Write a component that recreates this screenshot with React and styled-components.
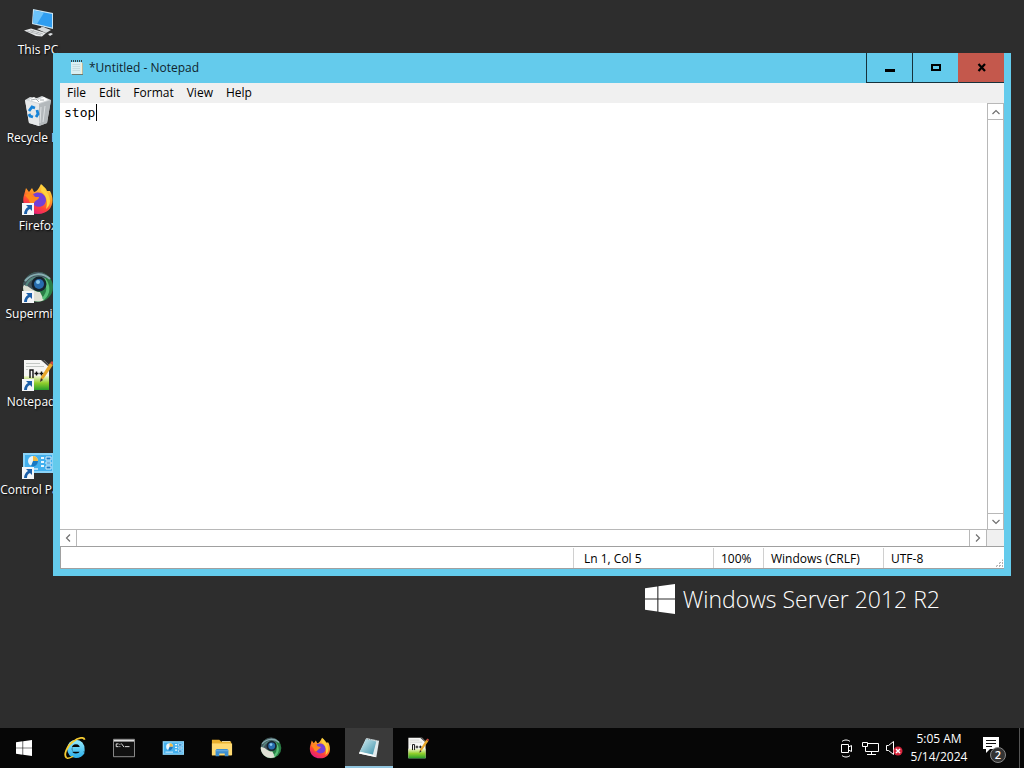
import React, { useState } from 'react';
import styled, { createGlobalStyle } from 'styled-components';

const statusItems = [
    { text: "Ln 1, Col 5", width: 140, pad: 10 },
    { text: "100%", width: 50, pad: 7 },
    { text: "Windows (CRLF)", width: 120, pad: 7 },
    { text: "UTF-8", width: 120, pad: 7 },
]

const desktopItems = [
    { name: "This PC", Icon: ComputerIcon },
    { name: "Recycle Bin", Icon: RecycleIcon },
    { name: "Firefox", Icon: FirefoxIcon, shortcut: true },
    { name: "Supermicro", Icon: SupermicroIcon, shortcut: true },
    { name: "Notepad++", Icon: NotepadPlusIcon, shortcut: true },
    { name: "Control Panel", Icon: ControlPanelIcon, shortcut: true },
]

const taskItems = [
    { name: "Internet Explorer", Icon: ExplorerIcon },
    { name: "Command Prompt", Icon: TerminalIcon },
    { name: "Control Panel", Icon: ControlPanelIcon },
    { name: "File Explorer", Icon: FolderIcon },
    { name: "Supermicro", Icon: SupermicroIcon },
    { name: "Firefox", Icon: FirefoxIcon },
    { name: "Notepad", Icon: NotepadTaskIcon, active: true },
    { name: "Notepad++", Icon: NotepadPlusIcon },
]

export default function App(){

    const [text, setText] = useState("stop")

    return(
        <>
        <GlobalStyle/>
        <Screen>
            <Desktop>
                <IconList>
                    {desktopItems.map(({ name, Icon, shortcut }) => (
                        <DesktopIcon key={name}>
                            <IconBox>
                                <Icon size={32}/>
                                {shortcut ? <ShortcutArrow/> : ""}
                            </IconBox>
                            <IconLabel>{name}</IconLabel>
                        </DesktopIcon>
                    ))}
                </IconList>

                <Brand>
                    <WindowsLogo size={30}/>
                    <BrandName>Windows Server 2012 R2</BrandName>
                </Brand>

                <NotepadWindow>
                    <TitleBar>
                        <NotepadSmallIcon/>
                        <Title>*Untitled - Notepad</Title>
                        <TitleButton aria-label="Minimize">
                            <svg width="12" height="12"><path d="M1 7h10v3H1z" fill="#000"/></svg>
                        </TitleButton>
                        <TitleButton aria-label="Maximize">
                            <svg width="12" height="12"><path d="M2 3h8v5H2z" fill="none" stroke="#000" strokeWidth="2"/></svg>
                        </TitleButton>
                        <TitleButton aria-label="Close" $close>
                            <svg width="12" height="12"><path d="M2.500 2L9 9M9 2L2.500 9" stroke="#000" strokeWidth="2.200"/></svg>
                        </TitleButton>
                    </TitleBar>

                    <MenuBar>
                        {["File","Edit","Format","View","Help"].map((m) => <MenuButton key={m}>{m}</MenuButton>)}
                    </MenuBar>

                    <Editor>
                        <PageArea>
                            <TextArea aria-label="Text editor" spellCheck={false} value={text} onChange={(e) => setText(e.target.value)}/>
                            <Caret/>
                        </PageArea>
                        <VerticalScroll>
                            <ScrollButton aria-label="Scroll up"><Chevron d="M1.500 7L5 3.500L8.500 7"/></ScrollButton>
                            <ScrollButton aria-label="Scroll down"><Chevron d="M1.500 3L5 6.500L8.500 3"/></ScrollButton>
                        </VerticalScroll>
                        <HorizontalScroll>
                            <ScrollButton $side aria-label="Scroll left"><Chevron d="M7 1.500L3.500 5L7 8.500"/></ScrollButton>
                            <ScrollButton $side aria-label="Scroll right"><Chevron d="M3 1.500L6.500 5L3 8.500"/></ScrollButton>
                        </HorizontalScroll>
                        <ScrollCorner/>
                    </Editor>

                    <StatusBar>
                        {statusItems.map((s) => <StatusCell key={s.text} $width={s.width} $pad={s.pad}>{s.text}</StatusCell>)}
                        <Grip/>
                    </StatusBar>
                </NotepadWindow>
            </Desktop>

            <Taskbar>
                <StartButton aria-label="Start"><WindowsLogo size={16}/></StartButton>
                <TaskList>
                    {taskItems.map(({ name, Icon, active }) => (
                        <TaskButton key={name} aria-label={name} $active={active}><Icon size={22}/></TaskButton>
                    ))}
                </TaskList>
                <Tray>
                    <TrayIcons/>
                    <Clock>
                        <span>5:05 AM</span>
                        <span>5/14/2024</span>
                    </Clock>
                    <NoticeButton aria-label="Notifications">
                        <svg width="24" height="24">
                            <path d="M1 1h16v12H8l-4 4v-4H1z" fill="#fff"/>
                            <path d="M4 4.500h10M4 7.500h10M4 10.500h6" stroke="#111"/>
                        </svg>
                        <Badge>2</Badge>
                    </NoticeButton>
                    <ShowDesktop aria-label="Show desktop"/>
                </Tray>
            </Taskbar>
        </Screen>
        </>
    )
}

// ICONS

function Chevron({ d }){
    return <svg width="10" height="10"><path d={d} fill="none" stroke="#707070" strokeWidth="1.200"/></svg>
}

function WindowsLogo({ size }){
    return(
        <svg width={size} height={size} viewBox="0 0 30 30" fill="#fff">
            <path d="M0 4.200L12.300 2.500V14.400H0zM13.400 2.300L30 0V14.400H13.400zM0 15.600H12.300V27.500L0 25.800zM13.400 15.600H30V30L13.400 27.700z"/>
        </svg>
    )
}

function ComputerIcon({ size }){
    return(
        <svg width={size} height={size} viewBox="0 0 32 32">
            <path d="M11 2L31 6V22L10 17z" fill="#c9e4f3"/>
            <path d="M12 3.500L30 7V20.500L11 16z" fill="#2f9df0"/>
            <path d="M12 3.500L22 5.400L15 17L11 16z" fill="#6cc3fa"/>
            <path d="M19 19.500l4 1v3l-4-1z" fill="#9aa3a8"/>
            <path d="M15 22l6-2 8 3-5 3z" fill="#d5d9db"/>
            <path d="M2 23.500L9 21.500L24 26L20 29.500L14 29z" fill="#e4e6e7"/>
            <path d="M5 24l14 4M8 23l13 4M9 25.500l3-2M14 27l3-2" stroke="#a4a8aa" strokeWidth=".7"/>
            <path d="M26 27l3-1 2 1-3 2z" fill="#dfe2e4"/>
        </svg>
    )
}

function RecycleIcon({ size }){
    return(
        <svg width={size} height={size} viewBox="0 0 32 32">
            <path d="M3 5L8 2L15 3L20 1L29 5L25 28L17 31L7 28z" fill="#d3d7d9"/>
            <path d="M3 5L17 9V31L7 28z" fill="#e6e8e9"/>
            <path d="M17 9L29 5L25 28L17 31z" fill="#b4b9bc"/>
            <path d="M7 5L12 2L16 5L22 2L26 5L17 8z" fill="#fff"/>
            <path d="M9 5l5-1 3 3M18 5l4 0" stroke="#a9afb2" fill="none"/>
            <path d="M7 16L10 12L13 13M15 15L16 19L14 22M11 22L8 21L7 19" fill="none" stroke="#1683d8" strokeWidth="2.800"/>
            <path d="M19 12l-1 16M23 11l-2 16" stroke="#dce0e2" strokeWidth="1"/>
        </svg>
    )
}

function FirefoxIcon({ size }){
    return(
        <svg width={size} height={size} viewBox="0 0 32 32">
            <defs>
                <linearGradient id="fox" x1=".8" y1="0" x2=".3" y2="1">
                    <stop offset="0" stopColor="#ffe54a"/>
                    <stop offset=".4" stopColor="#ff9a24"/>
                    <stop offset=".7" stopColor="#ff4339"/>
                    <stop offset="1" stopColor="#e31684"/>
                </linearGradient>
            </defs>
            <path d="M19 1C22 4 24 5 25 8L28 8C34 19 29 31 16 31C5 31 -1 22 2 12L4 5L7 9L10 5L12 9C15 9 17 5 19 1z" fill="url(#fox)"/>
            <path d="M11 11C17 7 24 11 24 17C24 23 17 26 12 22C8 19 9 17 12 17L16 15C13 14 12 13 11 11z" fill="#7440d6"/>
            <path d="M3 12L8 10L11 14L17 14C17 17 13 17 12 20C10 22 7 20 7 17z" fill="#ff8a1c"/>
            <path d="M20 2C22 7 28 10 28 18C28 22 26 24 24 26C26 19 25 13 19 8z" fill="#ffd43c"/>
        </svg>
    )
}

function SupermicroIcon({ size }){
    return(
        <svg width={size} height={size} viewBox="0 0 32 32">
            <circle cx="16" cy="16" r="15" fill="#2a7d46"/>
            <path d="M1 16A15 15 0 0 1 25 4L20 20L10 19z" fill="#43545c"/>
            <path d="M2 14C8 15 11 21 18 21L22 29C12 34 1 26 1 16z" fill="#dfe0d4"/>
            <path d="M3 10C10 2 20 1 28 8" fill="none" stroke="#87aeb1" strokeWidth="2"/>
            <path d="M4 15C7 7 15 4 23 8" fill="none" stroke="#54877f" strokeWidth="2"/>
            <path d="M22 8C28 16 26 23 21 28" fill="none" stroke="#58c078" strokeWidth="3"/>
            <circle cx="17" cy="13" r="7.500" fill="#16232e"/>
            <circle cx="17" cy="13" r="5" fill="#286cae"/>
            <circle cx="16" cy="11" r="2" fill="#8bc9ee"/>
        </svg>
    )
}

function NotepadPlusIcon({ size }){
    return(
        <svg width={size} height={size} viewBox="0 0 32 32">
            <defs>
                <linearGradient id="leaf" x1="0" y1="0" x2="0" y2="1">
                    <stop offset="0" stopColor="#f3f6d2"/>
                    <stop offset=".5" stopColor="#91cf2c"/>
                    <stop offset="1" stopColor="#269e2b"/>
                </linearGradient>
            </defs>
            <path d="M2 1H22L27 6V31H2z" fill="#f6f6f4"/>
            <path d="M19 1H22L27 6V8z" fill="#444"/>
            <path d="M4 4.500H18M4 7.500H22M4 10.500H6" stroke="#c4c8c4"/>
            <path d="M2 17H27V31H2z" fill="url(#leaf)"/>
            <path d="M8 19V11H11V19M12.500 14.500H16.500M14.500 12.500V16.500M17.500 14.500H21.500M19.500 12.500V16.500" fill="none" stroke="#111" strokeWidth="1.400"/>
            <path d="M28 4L31 6L22 19L18 23L19 18z" fill="#e8a62a"/>
            <path d="M28 4L30 2L32 4L31 6z" fill="#d1493e"/>
            <path d="M18 23L19 19L21 21z" fill="#333"/>
        </svg>
    )
}

function ControlPanelIcon({ size }){
    return(
        <svg width={size} height={size} viewBox="0 0 32 32">
            <path d="M1 6H32V26H1z" fill="#8bd3f7"/>
            <path d="M3 8H30V24H3z" fill="#43b0ee"/>
            <circle cx="11" cy="14" r="5" fill="#e9f6fd"/>
            <path d="M11 14V9A5 5 0 0 1 16 14z" fill="#f2ba43"/>
            <path d="M11 14H16A5 5 0 0 1 9 19z" fill="#1979c4"/>
            <path d="M19 11H22M19 15H22M19 19H22" stroke="#e9f6fd" strokeWidth="2"/>
            <path d="M24 10H29V13H24zM24 15H29V17H24zM24 19H29V22H24z" fill="#1979c4" stroke="#d8f0fc"/>
            <path d="M5 22H16" stroke="#d8f0fc" strokeWidth="1.500"/>
        </svg>
    )
}

function ExplorerIcon({ size }){
    return(
        <svg width={size} height={size} viewBox="0 0 24 24">
            <defs>
                <linearGradient id="ie" x1="0" y1="0" x2="0" y2="1">
                    <stop offset="0" stopColor="#8be4fb"/>
                    <stop offset="1" stopColor="#35b4ea"/>
                </linearGradient>
            </defs>
            <path d="M20.500 16C18.500 19.500 16 20.500 13 20.500C8.500 20.500 6 17 6 13C6 8.500 9 5.500 13 5.500C17.500 5.500 20 8.500 20 13.500H9" fill="none" stroke="url(#ie)" strokeWidth="5"/>
            <path d="M3 23C-1 20 3 10 10 5C16 0 22 0 22.500 3" fill="none" stroke="#f5cb32" strokeWidth="2"/>
            <path d="M3 23C5 24 8 22 10 21" fill="none" stroke="#f5cb32" strokeWidth="1.500"/>
        </svg>
    )
}

function TerminalIcon({ size }){
    return(
        <svg width={size} height={size} viewBox="0 0 24 24">
            <path d="M.5 2.500H23.500V21.500H.5z" fill="#111" stroke="#999"/>
            <path d="M1 3H23V5H1z" fill="#ddd"/>
            <path d="M6 7.500H3.500V10.500H6M7.500 7.500v1M7.500 10v1M9 7L12 11M13 10.500H18" fill="none" stroke="#eee"/>
        </svg>
    )
}

function FolderIcon({ size }){
    return(
        <svg width={size} height={size} viewBox="0 0 24 24">
            <path d="M1 3H9L11 5H22V20H1z" fill="#e9af2d"/>
            <path d="M1 7H23V20H1z" fill="#ffda72"/>
            <path d="M12 5H21" stroke="#fff1ba"/>
            <path d="M5 21V15C5 13.500 6 13 7 13H17C18.500 13 19 14 19 15V21H15V18H9V21z" fill="#3d8fd1"/>
            <path d="M5 15H19" stroke="#73b5e8"/>
        </svg>
    )
}

function NotepadTaskIcon({ size }){
    return(
        <svg width={size} height={size} viewBox="0 0 24 24">
            <defs>
                <linearGradient id="pad" x1="0" y1="0" x2="1" y2="1">
                    <stop offset="0" stopColor="#d8f1f5"/>
                    <stop offset="1" stopColor="#3a8fa8"/>
                </linearGradient>
            </defs>
            <path d="M9 1L23 4L20 22L1 18z" fill="#e1eaec"/>
            <path d="M9 2L20 5L16 20L2 16z" fill="url(#pad)"/>
            <path d="M2 16L16 19L20 22L1 18z" fill="#fff"/>
            <path d="M9 2L22 4" stroke="#78868b" strokeDasharray="1 1"/>
        </svg>
    )
}

function NotepadSmallIcon(){
    return(
        <svg width="16" height="16" viewBox="0 0 16 16">
            <path d="M3 3H14V15H3z" fill="#6d7a70"/>
            <path d="M2 2H12.500V14H2z" fill="#d9eff2"/>
            <path d="M12 2L13.500 3.500V14H12z" fill="#f6efcf"/>
            <path d="M3.500 4.500H11M3.500 6.500H11M3.500 8.500H11M3.500 10.500H11" stroke="#c6dde1"/>
            <path d="M2 1H13" stroke="#34464d" strokeWidth="2" strokeDasharray="1 1"/>
        </svg>
    )
}

function ShortcutArrow(){
    return(
        <ArrowBox viewBox="0 0 12 12">
            <path d="M0 0H12V12H0z" fill="#f4f6f8"/>
            <path d="M4 2H10V8L8 6C6 7 5 8 5 11H2C2 8 4 5 6 4z" fill="#1c5fa8"/>
        </ArrowBox>
    )
}

function TrayIcons(){
    return(
        <svg width="64" height="20" fill="none" stroke="#fff">
            <path d="M2.500 6.500H9.500V14.500H2.500zM9.500 9L12.500 7.500V13.500L9.500 12M3 3.500C5 1.500 9 1.500 11 3.500M3 17.500C5 19.500 9 19.500 11 17.500"/>
            <path d="M29 5.500H39.500V13.500H26.500V9M32.500 13.500V16.500M28 16.500H37M23.500 4.500H28.500V8.500H23.500zM26.500 8.500V11"/>
            <path d="M47.500 7.500H49.500L54.500 3.500V16.500L49.500 12.500H47.500z"/>
            <circle cx="59" cy="13" r="4.500" fill="#d7263d" stroke="none"/>
            <path d="M57 11L61 15M61 11L57 15" strokeWidth="1.500"/>
        </svg>
    )
}

// CSS

const GlobalStyle = createGlobalStyle`
    * {
        box-sizing: border-box;
    }
    body {
        margin: 0;
        background: #2d2d2d;
        font-family: 'Open Sans', 'Noto Sans', sans-serif;
        font-size: 12px;
        line-height: 16px;
    }
    button {
        padding: 0;
        border: 0;
        border-radius: 0;
        background: transparent;
        color: inherit;
        font: inherit;
    }
    svg {
        display: block;
        flex-shrink: 0;
    }
`

const Screen = styled.div`
    display: flex;
    flex-direction: column;
    height: 100vh;
    overflow: hidden;
`

const Desktop = styled.main`
    position: relative;
    flex: 1;
    min-height: 0;
    background: #2d2d2d;
`

const IconList = styled.div`
    display: flex;
    flex-direction: column;
    gap: 37px;
    width: 76px;
    padding-top: 7px;
`

const DesktopIcon = styled.button`
    display: flex;
    flex-direction: column;
    align-items: center;
    gap: 3px;
`

const IconBox = styled.span`
    position: relative;
`

const ArrowBox = styled.svg`
    position: absolute;
    left: 0;
    bottom: 0;
    width: 12px;
    height: 12px;
`

const IconLabel = styled.span`
    color: #fff;
    white-space: nowrap;
    text-shadow: 1px 1px 2px #000;
`

const Brand = styled.div`
    position: absolute;
    right: 84px;
    bottom: 112px;
    display: flex;
    align-items: center;
    gap: 8px;
`

const BrandName = styled.span`
    color: #fff;
    font-size: 23px;
    font-weight: 300;
    line-height: 34px;
    white-space: nowrap;
`

const NotepadWindow = styled.section`
    position: absolute;
    top: 53px;
    right: 13px;
    bottom: 152px;
    left: 53px;
    display: flex;
    flex-direction: column;
    padding: 0 7px 7px;
    background: #64cbec;
    color: #000;
`

const TitleBar = styled.header`
    display: flex;
    align-items: center;
    height: 30px;
    padding-left: 9px;
`

const Title = styled.h1`
    flex: 1;
    margin: 0;
    padding-left: 4px;
    color: #10242c;
    font-size: 12px;
    font-weight: 400;
`

const TitleButton = styled.button`
    display: flex;
    align-items: center;
    justify-content: center;
    align-self: stretch;
    width: 46px;
    background: ${props => props.$close ? "#c4584c" : "transparent"};
    border-left: 1px solid ${props => props.$close ? "#c4584c" : "#16323c"};
    border-bottom: 1px solid #16323c;
`

const MenuBar = styled.nav`
    display: flex;
    height: 20px;
    background: #f0f0f0;
`

const MenuButton = styled.button`
    padding: 0 6px 0 7px;
`

const Editor = styled.div`
    flex: 1;
    min-height: 0;
    display: grid;
    grid-template-columns: 1fr 17px;
    grid-template-rows: 1fr 17px;
    background: #fff;
`

const PageArea = styled.div`
    position: relative;
    display: flex;
`

const TextArea = styled.textarea`
    flex: 1;
    padding: 1px 4px;
    border: 0;
    outline: 0;
    resize: none;
    background: #fff;
    color: #000;
    caret-color: transparent;
    font-family: 'DejaVu Sans Mono', monospace;
    font-size: 13px;
    line-height: 17px;
`

const Caret = styled.span`
    position: absolute;
    top: 1px;
    left: 36px;
    width: 1px;
    height: 17px;
    background: #000;
`

const VerticalScroll = styled.div`
    display: flex;
    flex-direction: column;
    justify-content: space-between;
    border: 1px solid #b8b8b8;
    border-bottom: 0;
`

const HorizontalScroll = styled.div`
    display: flex;
    justify-content: space-between;
    border-top: 1px solid #b8b8b8;
    border-right: 1px solid #b8b8b8;
`

const ScrollButton = styled.button`
    display: flex;
    align-items: center;
    justify-content: center;
    width: ${props => props.$side ? "17px" : "100%"};
    height: 16px;
    border: 0 solid #b8b8b8;

    &:first-child{
        border-width: ${props => props.$side ? "0 1px 0 0" : "0 0 1px 0"};
    }

    &:last-child{
        border-width: ${props => props.$side ? "0 0 0 1px" : "1px 0 0 0"};
    }
`

const ScrollCorner = styled.div`
    background: #f0f0f0;
    border-top: 1px solid #b8b8b8;
`

const StatusBar = styled.footer`
    position: relative;
    display: flex;
    justify-content: flex-end;
    height: 23px;
    padding: 1px 1px 0 0;
    background: #fff;
    border: 1px solid #a0a0a0;
    border-right: 0;
`

const StatusCell = styled.span`
    width: ${props => props.$width}px;
    padding-left: ${props => props.$pad}px;
    border-left: 1px solid #d0d0d0;
    line-height: 21px;
    white-space: nowrap;
`

const Grip = styled.span`
    position: absolute;
    right: 1px;
    bottom: 1px;
    width: 8px;
    height: 8px;
    clip-path: polygon(100% 0, 100% 100%, 0 100%);
    background: repeating-conic-gradient(#b0b0b0 0 25%, #fff 0 100%) 0 0 / 3px 3px;
`

const Taskbar = styled.footer`
    display: flex;
    height: 40px;
    background: #060606;
`

const StartButton = styled.button`
    display: flex;
    align-items: center;
    justify-content: center;
    width: 48px;
`

const TaskList = styled.div`
    flex: 1;
    display: flex;
    gap: 1px;
    padding-left: 3px;
`

const TaskButton = styled.button`
    display: flex;
    align-items: center;
    justify-content: center;
    width: 48px;
    border-top: 2px solid transparent;
    border-bottom: 2px solid ${props => props.$active ? "#91c5df" : "transparent"};
    background: ${props => props.$active ? "#3a3a3a" : "transparent"} border-box;
`

const Tray = styled.div`
    display: flex;
    align-items: center;
    color: #fff;
`

const Clock = styled.time`
    display: flex;
    flex-direction: column;
    width: 72px;
    text-align: center;
    line-height: 18px;
`

const NoticeButton = styled.button`
    position: relative;
    width: 24px;
    height: 24px;
    margin: 0 13px 0 7px;
`

const Badge = styled.span`
    position: absolute;
    right: 0;
    bottom: -3px;
    width: 16px;
    height: 16px;
    border: 1px solid #888;
    border-radius: 50%;
    background: #333;
    font-size: 11px;
    font-weight: 600;
    line-height: 14px;
`

const ShowDesktop = styled.button`
    align-self: stretch;
    width: 5px;
    border-left: 1px solid #555;
`
